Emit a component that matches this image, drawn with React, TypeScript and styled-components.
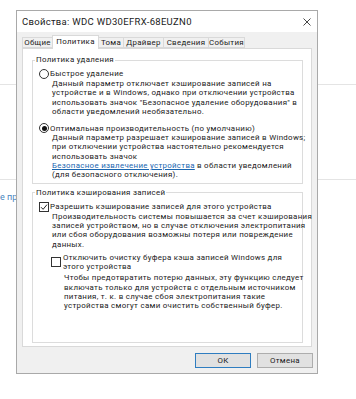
import React from "react";
import styled, { createGlobalStyle } from "styled-components";

const GlobalStyle = createGlobalStyle`
  body {
    margin: 0;
    background: #ffffff;
    font-family: Roboto, "Noto Sans", "Liberation Sans", sans-serif;
  }
`;

const Page = styled.div`
  position: relative;
  width: 356px;
  height: 399px;
  overflow: hidden;
  background: #ffffff;
`;

const Backdrop = styled.div`
  display: flex;
  flex-direction: column;
`;

const BgRule = styled.div<{ $top: number }>`
  margin-top: ${({ $top }) => $top}px;
  height: 1px;
  background: #e4e4e4;
`;

const BgLink = styled.div`
  margin-top: 11px;
  font-size: 9px;
  line-height: 12px;
  color: #4a86c0;
  white-space: nowrap;
`;

const Dialog = styled.div`
  position: absolute;
  left: 16px;
  top: 10px;
  width: 302px;
  box-sizing: border-box;
  border: 1px solid #a9a9a9;
  background: #f0f0f0;
  display: flex;
  flex-direction: column;
  color: #1a1a1a;
  letter-spacing: 0.3px;
`;

const TitleBar = styled.div`
  height: 21px;
  background: #ffffff;
  display: flex;
  align-items: center;
  justify-content: space-between;
  padding: 0 6px 0 5px;
`;

const Title = styled.span`
  font-size: 9.5px;
  white-space: nowrap;
`;

const Body = styled.div`
  padding: 3px 5px 0 5px;
  display: flex;
  flex-direction: column;
`;

const TabRow = styled.div`
  display: flex;
  align-items: flex-end;
  height: 13px;
`;

const Tab = styled.div<{ $width: number; $active?: boolean }>`
  position: relative;
  z-index: ${({ $active }) => ($active ? 2 : 1)};
  width: ${({ $width }) => $width}px;
  height: ${({ $active }) => ($active ? 14 : 11)}px;
  margin-left: -1px;
  margin-bottom: ${({ $active }) => ($active ? -1 : 0)}px;
  box-sizing: border-box;
  border: 1px solid #d9d9d9;
  border-bottom: ${({ $active }) => ($active ? "none" : "1px solid #d9d9d9")};
  background: ${({ $active }) => ($active ? "#ffffff" : "#f0f0f0")};
  font-size: 7.9px;
  line-height: ${({ $active }) => ($active ? 11 : 9)}px;
  text-align: center;
  white-space: nowrap;

  &:first-child {
    margin-left: 0;
  }
`;

const Panel = styled.div`
  height: 299px;
  box-sizing: border-box;
  border: 1px solid #d9d9d9;
  background: #ffffff;
  padding: 6px 8px 3px 9px;
  display: flex;
  flex-direction: column;
  gap: 4px;
`;

const Group = styled.fieldset<{ $grow?: boolean }>`
  margin: 0;
  min-width: 0;
  flex: ${({ $grow }) => ($grow ? 1 : "none")};
  border: 1px solid #dcdcdc;
  padding: 0 0 3px 2px;
`;

const Legend = styled.legend`
  padding: 0 1px;
  font-size: 7.9px;
  line-height: 10px;
  white-space: nowrap;
`;

const GroupContent = styled.div`
  padding: 4px 0 0 4px;
  display: flex;
  flex-direction: column;
`;

const OptionRow = styled.div<{ $gapTop?: number; $indent?: number }>`
  display: flex;
  align-items: center;
  gap: 1px;
  margin-top: ${({ $gapTop }) => $gapTop || 0}px;
  margin-left: ${({ $indent }) => $indent || 0}px;
  font-size: 7.9px;
  line-height: 9.3px;
  min-height: 10px;
`;

const Radio = styled.span<{ $checked?: boolean }>`
  flex: none;
  width: 10px;
  height: 10px;
  box-sizing: border-box;
  border: 1px solid #333333;
  border-radius: 50%;
  background: #ffffff;
  display: flex;
  align-items: center;
  justify-content: center;

  &::after {
    content: "";
    width: 5px;
    height: 5px;
    border-radius: 50%;
    background: ${({ $checked }) => ($checked ? "#111111" : "transparent")};
  }
`;

const Box = styled.span`
  flex: none;
  width: 10px;
  height: 10px;
  box-sizing: border-box;
  border: 1px solid #333333;
  background: #ffffff;
  display: flex;
  align-items: center;
  justify-content: center;
`;

const OptionText = styled.span<{ $pad?: number }>`
  padding-left: ${({ $pad }) => $pad || 0}px;
  white-space: nowrap;
`;

const Desc = styled.div<{ $indent: number; $gapTop?: number }>`
  margin-left: ${({ $indent }) => $indent}px;
  margin-top: ${({ $gapTop }) => $gapTop || 0}px;
  font-size: 7.9px;
  line-height: 9.3px;
`;

const Line = styled.div`
  white-space: nowrap;
`;

const Link = styled.span`
  color: #1a66b0;
  text-decoration: underline;
`;

const Footer = styled.div`
  display: flex;
  justify-content: flex-end;
  gap: 6px;
  padding: 6px 4px 5px 0;
`;

const Button = styled.button<{ $primary?: boolean }>`
  width: 56px;
  height: 15px;
  padding: 0;
  box-sizing: border-box;
  border: 1px solid ${({ $primary }) => ($primary ? "#2f7dc0" : "#adadad")};
  background: #e1e1e1;
  font-family: Roboto, "Noto Sans", "Liberation Sans", sans-serif;
  font-size: 7.9px;
  letter-spacing: 0.3px;
  color: #1a1a1a;
`;

const CloseIcon = () => (
  <svg width="8" height="8" viewBox="0 0 8 8">
    <path d="M0.5 0.5 L7.5 7.5 M7.5 0.5 L0.5 7.5" stroke="#333" strokeWidth="0.9" />
  </svg>
);

const CheckMark = () => (
  <svg width="8" height="8" viewBox="0 0 8 8">
    <path d="M1 4.2 L3.1 6.3 L7 1.6" fill="none" stroke="#222" strokeWidth="1" />
  </svg>
);

const tabs = [
  { label: "Общие", width: 31 },
  { label: "Политика", width: 47, active: true },
  { label: "Тома", width: 26 },
  { label: "Драйвер", width: 41 },
  { label: "Сведения", width: 46 },
  { label: "События", width: 37 },
];

const fastDesc = [
  "Данный параметр отключает кэширование записей на",
  "устройстве и в Windows, однако при отключении устройства",
  "использовать значок \"Безопасное удаление оборудования\" в",
  "области уведомлений необязательно.",
];

const cacheDesc = [
  "Производительность системы повышается за счет кэширования",
  "записей устройством, но в случае отключения электропитания",
  "или сбоя оборудования возможны потеря или повреждение",
  "данных.",
];

const flushDesc = [
  "Чтобы предотвратить потерю данных, эту функцию следует",
  "включать только для устройств с отдельным источником",
  "питания, т. к.  в случае сбоя электропитания такие",
  "устройства смогут сами очистить собственный буфер.",
];

export default function App() {
  return (
    <Page>
      <GlobalStyle />
      <Backdrop>
        <BgRule $top={84} />
        <BgRule $top={94} />
        <BgLink>е пр</BgLink>
      </Backdrop>
      <Dialog>
        <TitleBar>
          <Title>Свойства: WDC WD30EFRX-68EUZN0</Title>
          <CloseIcon />
        </TitleBar>
        <Body>
          <TabRow>
            {tabs.map((t) => (
              <Tab key={t.label} $width={t.width} $active={t.active}>
                {t.label}
              </Tab>
            ))}
          </TabRow>
          <Panel>
            <Group>
              <Legend>Политика удаления</Legend>
              <GroupContent>
                <OptionRow>
                  <Radio />
                  <OptionText>Быстрое удаление</OptionText>
                </OptionRow>
                <Desc $indent={13}>
                  {fastDesc.map((l) => (
                    <Line key={l}>{l}</Line>
                  ))}
                </Desc>
                <OptionRow $gapTop={7}>
                  <Radio $checked />
                  <OptionText>Оптимальная производительность (по умолчанию)</OptionText>
                </OptionRow>
                <Desc $indent={13}>
                  <Line>Данный параметр разрешает кэширование записей в Windows;</Line>
                  <Line>при отключении устройства настоятельно рекомендуется</Line>
                  <Line>использовать значок</Line>
                  <Line>
                    <Link>Безопасное извлечение устройства</Link> в области уведомлений
                  </Line>
                  <Line>(для безопасного отключения).</Line>
                </Desc>
              </GroupContent>
            </Group>
            <Group $grow>
              <Legend>Политика кэширования записей</Legend>
              <GroupContent>
                <OptionRow>
                  <Box>
                    <CheckMark />
                  </Box>
                  <OptionText>Разрешить кэширование записей для этого устройства</OptionText>
                </OptionRow>
                <Desc $indent={13}>
                  {cacheDesc.map((l) => (
                    <Line key={l}>{l}</Line>
                  ))}
                </Desc>
                <OptionRow $gapTop={4} $indent={12}>
                  <Box />
                  <OptionText $pad={1}>
                    Отключить очистку буфера кэша записей Windows для
                    <br />
                    этого устройства
                  </OptionText>
                </OptionRow>
                <Desc $indent={25} $gapTop={2}>
                  {flushDesc.map((l) => (
                    <Line key={l}>{l}</Line>
                  ))}
                </Desc>
              </GroupContent>
            </Group>
          </Panel>
        </Body>
        <Footer>
          <Button $primary>ОК</Button>
          <Button>Отмена</Button>
        </Footer>
      </Dialog>
    </Page>
  );
}
